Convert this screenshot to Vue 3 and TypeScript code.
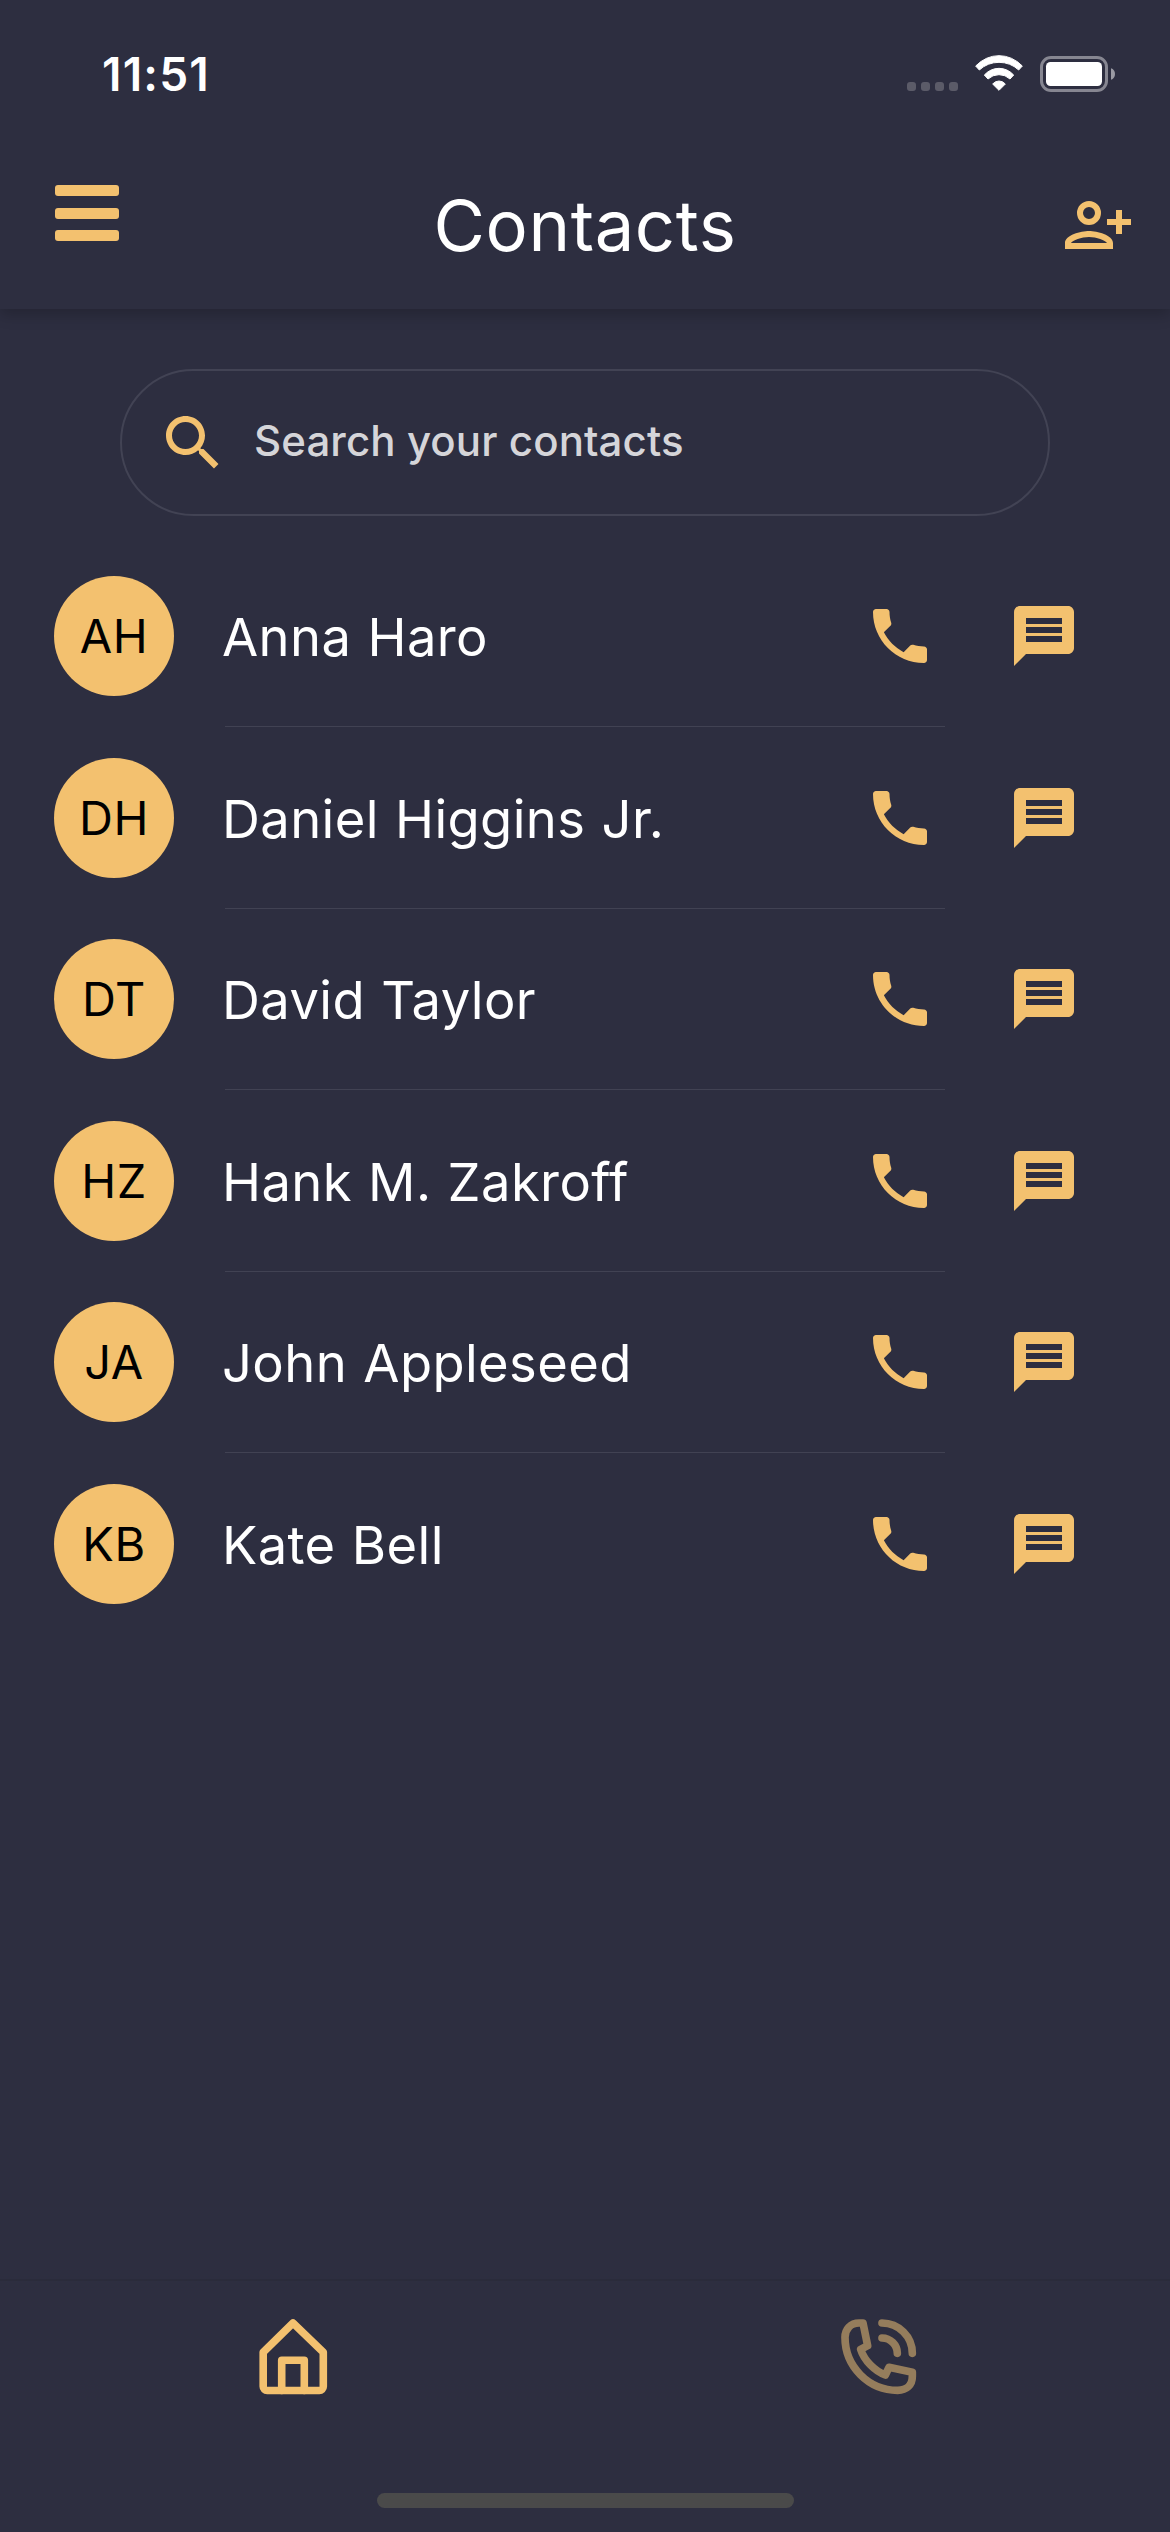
<script setup lang="ts">
interface Contact {
  initials: string
  name: string
}

const contacts: Contact[] = [
  { initials: 'AH', name: 'Anna Haro' },
  { initials: 'DH', name: 'Daniel Higgins Jr.' },
  { initials: 'DT', name: 'David Taylor' },
  { initials: 'HZ', name: 'Hank M. Zakroff' },
  { initials: 'JA', name: 'John Appleseed' },
  { initials: 'KB', name: 'Kate Bell' },
]
</script>

<template>
  <div class="screen">
    <header class="top">
      <div class="status">
        <span class="time">11:51</span>
        <div class="indicators">
          <div class="dots"><i v-for="n in 4" :key="n"></i></div>
          <svg class="wifi" viewBox="282 102 150 114" fill="#fff" stroke="#fff" stroke-width="3" stroke-linejoin="round">
            <path d="M287 138Q318 107 357 107T427 138L416 150Q391 127 357 127T298 150Z" />
            <path d="M313 165Q332 145 357 145T401 165L390 177Q376 164 357 164T324 177Z" />
            <path d="M338 192Q346 183 357 183T376 192L357 211Z" />
          </svg>
          <svg class="battery" viewBox="0 0 76 36">
            <rect x="1.5" y="1.5" width="65" height="33" rx="9.5" fill="none" stroke="#868691" stroke-width="3" />
            <rect x="6" y="6" width="56" height="24" rx="4.5" fill="#fff" />
            <path d="M71 12.2C73.6 13 75 15.3 75 18s-1.4 5-4 5.8z" fill="#9a9aa3" />
          </svg>
        </div>
      </div>
      <div class="bar">
        <button class="menu" aria-label="Menu"><i></i><i></i><i></i></button>
        <h1>Contacts</h1>
        <svg class="add" viewBox="0 0 66 48">
          <path fill-rule="evenodd" d="M24 0a12 12 0 1 1 0 24a12 12 0 1 1 0-24zm0 6a6 6 0 1 0 0 12a6 6 0 1 0 0-12zM0 48V42C0 34 16 30 24 30S48 34 48 42V48zM6 42H42C40.5 39.5 31.5 36 24 36S7.5 39.5 6 42zM51 9h6v9h9v6h-9v9h-6v-9h-9v-6h9z" />
        </svg>
      </div>
    </header>

    <main>
      <div class="search">
        <svg class="icon" viewBox="0 0 24 24">
          <path d="M15.5 14h-.79l-.28-.27C15.41 12.59 16 11.11 16 9.5 16 5.91 13.09 3 9.5 3S3 5.91 3 9.5 5.91 16 9.5 16c1.61 0 3.09-.59 4.23-1.57l.27.28v.79l5 4.99L20.49 19l-4.99-5zm-6 0C7.01 14 5 11.99 5 9.5S7.01 5 9.5 5 14 7.01 14 9.5 11.99 14 9.5 14z" />
        </svg>
        <span>Search your contacts</span>
      </div>

      <ul>
        <li v-for="c in contacts" :key="c.name">
          <div class="row">
            <span class="avatar">{{ c.initials }}</span>
            <span class="name">{{ c.name }}</span>
            <svg class="icon" viewBox="0 0 24 24">
              <path d="M6.62 10.79c1.44 2.83 3.76 5.14 6.59 6.59l2.2-2.2c.27-.27.67-.36 1.02-.24 1.12.37 2.33.57 3.57.57.55 0 1 .45 1 1V20c0 .55-.45 1-1 1-9.39 0-17-7.61-17-17 0-.55.45-1 1-1h3.5c.55 0 1 .45 1 1 0 1.25.2 2.45.57 3.57.11.35.03.74-.25 1.02l-2.2 2.2z" />
            </svg>
            <svg class="icon message" viewBox="0 0 24 24">
              <path d="M20 2H4c-1.1 0-1.99.9-1.99 2L2 22l4-4h14c1.1 0 2-.9 2-2V4c0-1.1-.9-2-2-2zm-2 12H6v-2h12v2zm0-3H6V9h12v2zm0-3H6V6h12v2z" />
            </svg>
          </div>
          <div class="divider"></div>
        </li>
      </ul>
    </main>

    <nav>
      <div class="tabs">
        <svg viewBox="0 0 84 84" stroke-width="7.6">
          <path d="M42 8L12.2 37.3V71.5a4 4 0 0 0 4 4H68.3a4 4 0 0 0 4-4V37.3z" />
          <path d="M30.7 75.5V45.2H53.3V75.5" />
        </svg>
        <svg class="inactive" viewBox="105 165 252 252" stroke-width="23">
          <path d="M243 189A91 91 0 0 1 334 280" />
          <path d="M243 234A46 46 0 0 1 289 280" />
          <path d="M186 189H174C149 189 132 207 132 232C132 320 203 391 290 391C317 391 334 375 334 349V337L264 322L253 345C221 333 190 302 179 268L200 257z" />
        </svg>
      </div>
      <div class="home-indicator"></div>
    </nav>
  </div>
</template>

<style>
body {
  background: #2d2e40;
}
</style>

<style scoped>
.screen {
  display: flex;
  flex-direction: column;
  width: 1170px;
  height: 2532px;
  overflow: hidden;
  background: #2d2e40;
  color: #fff;
  font-family: Inter, "Liberation Sans", sans-serif;
}

.top {
  box-sizing: border-box;
  height: 309px;
  background: #2d2e40;
  box-shadow: 0 6px 14px rgba(0, 0, 0, 0.2);
}

.status {
  box-sizing: border-box;
  display: flex;
  align-items: center;
  justify-content: space-between;
  height: 141px;
  padding: 7px 54px 0 102px;
}

.time {
  font-size: 46px;
  font-weight: 600;
  line-height: 60px;
  letter-spacing: 1.2px;
}

.indicators {
  display: flex;
  align-items: center;
}

.dots {
  display: flex;
  gap: 5px;
  margin: 24px 16px 0 0;
}

.dots i {
  width: 9px;
  height: 9px;
  border-radius: 3px;
  background: #5b5b68;
}

.wifi {
  width: 50px;
  height: 38px;
  margin: -3px 16px 0 0;
}

.battery {
  width: 76px;
  height: 36px;
}

.bar {
  display: grid;
  grid-template-columns: 1fr auto 1fr;
  align-items: center;
  height: 168px;
  padding: 0 39px 0 55px;
}

.menu {
  display: flex;
  flex-direction: column;
  gap: 11.5px;
  width: 64px;
  margin: 0 0 24px;
  padding: 0;
  border: 0;
  background: none;
}

.menu i {
  height: 11px;
  border-radius: 3px;
  background: #f3c16f;
}

h1 {
  margin: 2px 0 0 -16px;
  font-size: 70.5px;
  font-weight: 400;
  line-height: 84px;
  letter-spacing: 0.6px;
}

.add {
  justify-self: end;
  width: 66px;
  height: 48px;
  fill: #f3c16f;
}

main {
  flex: 1;
}

.search {
  box-sizing: border-box;
  display: flex;
  align-items: center;
  height: 147px;
  margin: 60px 120px 30px;
  padding: 0 35px;
  border: 2px solid #424354;
  border-radius: 74px;
  color: #d5d5d9;
  font-size: 42px;
  font-weight: 500;
}

.search span {
  margin: 0 0 4px 25px;
  letter-spacing: 0.1px;
}

.icon {
  flex: none;
  width: 72px;
  height: 72px;
  fill: #f3c16f;
}

ul {
  margin: 0;
  padding: 0;
  list-style: none;
}

li {
  height: 181.6px;
}

.row {
  display: flex;
  align-items: center;
  height: 180px;
  padding: 0 90px 0 54px;
}

.avatar {
  flex: none;
  width: 120px;
  height: 120px;
  border-radius: 50%;
  background: #f3c16f;
  color: #000;
  font-size: 47px;
  line-height: 120px;
  letter-spacing: 0.5px;
  text-align: center;
}

.name {
  flex: 1;
  margin: 2px 0 0 48px;
  font-size: 52.5px;
  line-height: 72px;
  letter-spacing: 0.4px;
  word-spacing: 1px;
  white-space: nowrap;
}

.message {
  margin-left: 72px;
}

.divider {
  width: 720px;
  height: 1px;
  margin-left: 225px;
  background: #414253;
}

li:last-child .divider {
  display: none;
}

nav {
  box-sizing: border-box;
  display: flex;
  flex-direction: column;
  align-items: center;
  justify-content: space-between;
  height: 253px;
  padding: 34px 0 24px;
  border-top: 2px solid #2a2b3b;
}

.tabs {
  display: grid;
  grid-template-columns: 1fr 1fr;
  justify-items: center;
  width: 100%;
}

.tabs svg {
  width: 84px;
  height: 84px;
  fill: none;
  stroke: #f3c16f;
  stroke-linecap: round;
  stroke-linejoin: round;
}

.tabs .inactive {
  stroke: #957d5c;
}

.home-indicator {
  width: 417px;
  height: 15px;
  border-radius: 8px;
  background: #4a4a4a;
}
</style>
